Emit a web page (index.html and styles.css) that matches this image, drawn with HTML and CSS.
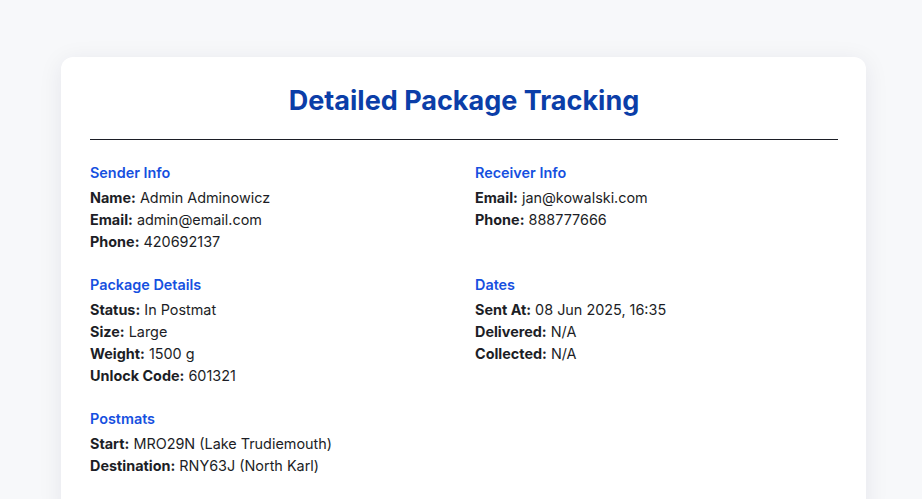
FILE: index.html
```html
<!DOCTYPE html>
<html lang="en">
<head>
<meta charset="utf-8">
<title>Detailed Package Tracking</title>
<link rel="stylesheet" href="styles.css">
</head>
<body>
<main class="card">
  <h1 class="title">Detailed Package Tracking</h1>
  <hr class="divider">
  <div class="grid">
    <section class="section">
      <h2 class="section-title">Sender Info</h2>
      <p class="row"><strong>Name:</strong> Admin Adminowicz</p>
      <p class="row"><strong>Email:</strong> admin@email.com</p>
      <p class="row"><strong>Phone:</strong> 420692137</p>
    </section>
    <section class="section">
      <h2 class="section-title">Receiver Info</h2>
      <p class="row"><strong>Email:</strong> jan@kowalski.com</p>
      <p class="row"><strong>Phone:</strong> 888777666</p>
    </section>
    <section class="section">
      <h2 class="section-title">Package Details</h2>
      <p class="row"><strong>Status:</strong> In Postmat</p>
      <p class="row"><strong>Size:</strong> Large</p>
      <p class="row"><strong>Weight:</strong> 1500 g</p>
      <p class="row"><strong>Unlock Code:</strong> 601321</p>
    </section>
    <section class="section">
      <h2 class="section-title">Dates</h2>
      <p class="row"><strong>Sent At:</strong> 08 Jun 2025, 16:35</p>
      <p class="row"><strong>Delivered:</strong> N/A</p>
      <p class="row"><strong>Collected:</strong> N/A</p>
    </section>
    <section class="section">
      <h2 class="section-title">Postmats</h2>
      <p class="row"><strong>Start:</strong> MRO29N (Lake Trudiemouth)</p>
      <p class="row"><strong>Destination:</strong> RNY63J (North Karl)</p>
    </section>
  </div>
</main>
</body>
</html>
```

FILE: styles.css
```css
html, body {
  margin: 0;
  padding: 0;
}
body {
  background: #f7f8fa;
  font-family: Inter, "Noto Sans", sans-serif;
  color: #1c1e26;
  padding-top: 57px;
}
.card {
  box-sizing: border-box;
  width: 805px;
  margin: 0 0 0 61px;
  background: #ffffff;
  border-radius: 12px;
  box-shadow: 0 4px 24px rgba(20, 30, 60, 0.08);
  padding: 28px 28px 40px 29px;
}
.title {
  margin: 0;
  text-align: center;
  font-size: 27px;
  font-weight: 700;
  line-height: 32px;
  color: #0b3ea8;
}
.divider {
  border: none;
  border-top: 1.5px solid #1c1e26;
  margin: 22px 0 23px;
}
.grid {
  display: grid;
  grid-template-columns: 1fr 1fr;
  column-gap: 22px;
  row-gap: 22px;
}
.section-title {
  margin: 0 0 4px;
  font-size: 14.4px;
  font-weight: 600;
  line-height: 20px;
  color: #1650e0;
}
.row {
  margin: 0;
  font-size: 14.4px;
  line-height: 22px;
}
.row strong {
  font-weight: 700;
}
```
